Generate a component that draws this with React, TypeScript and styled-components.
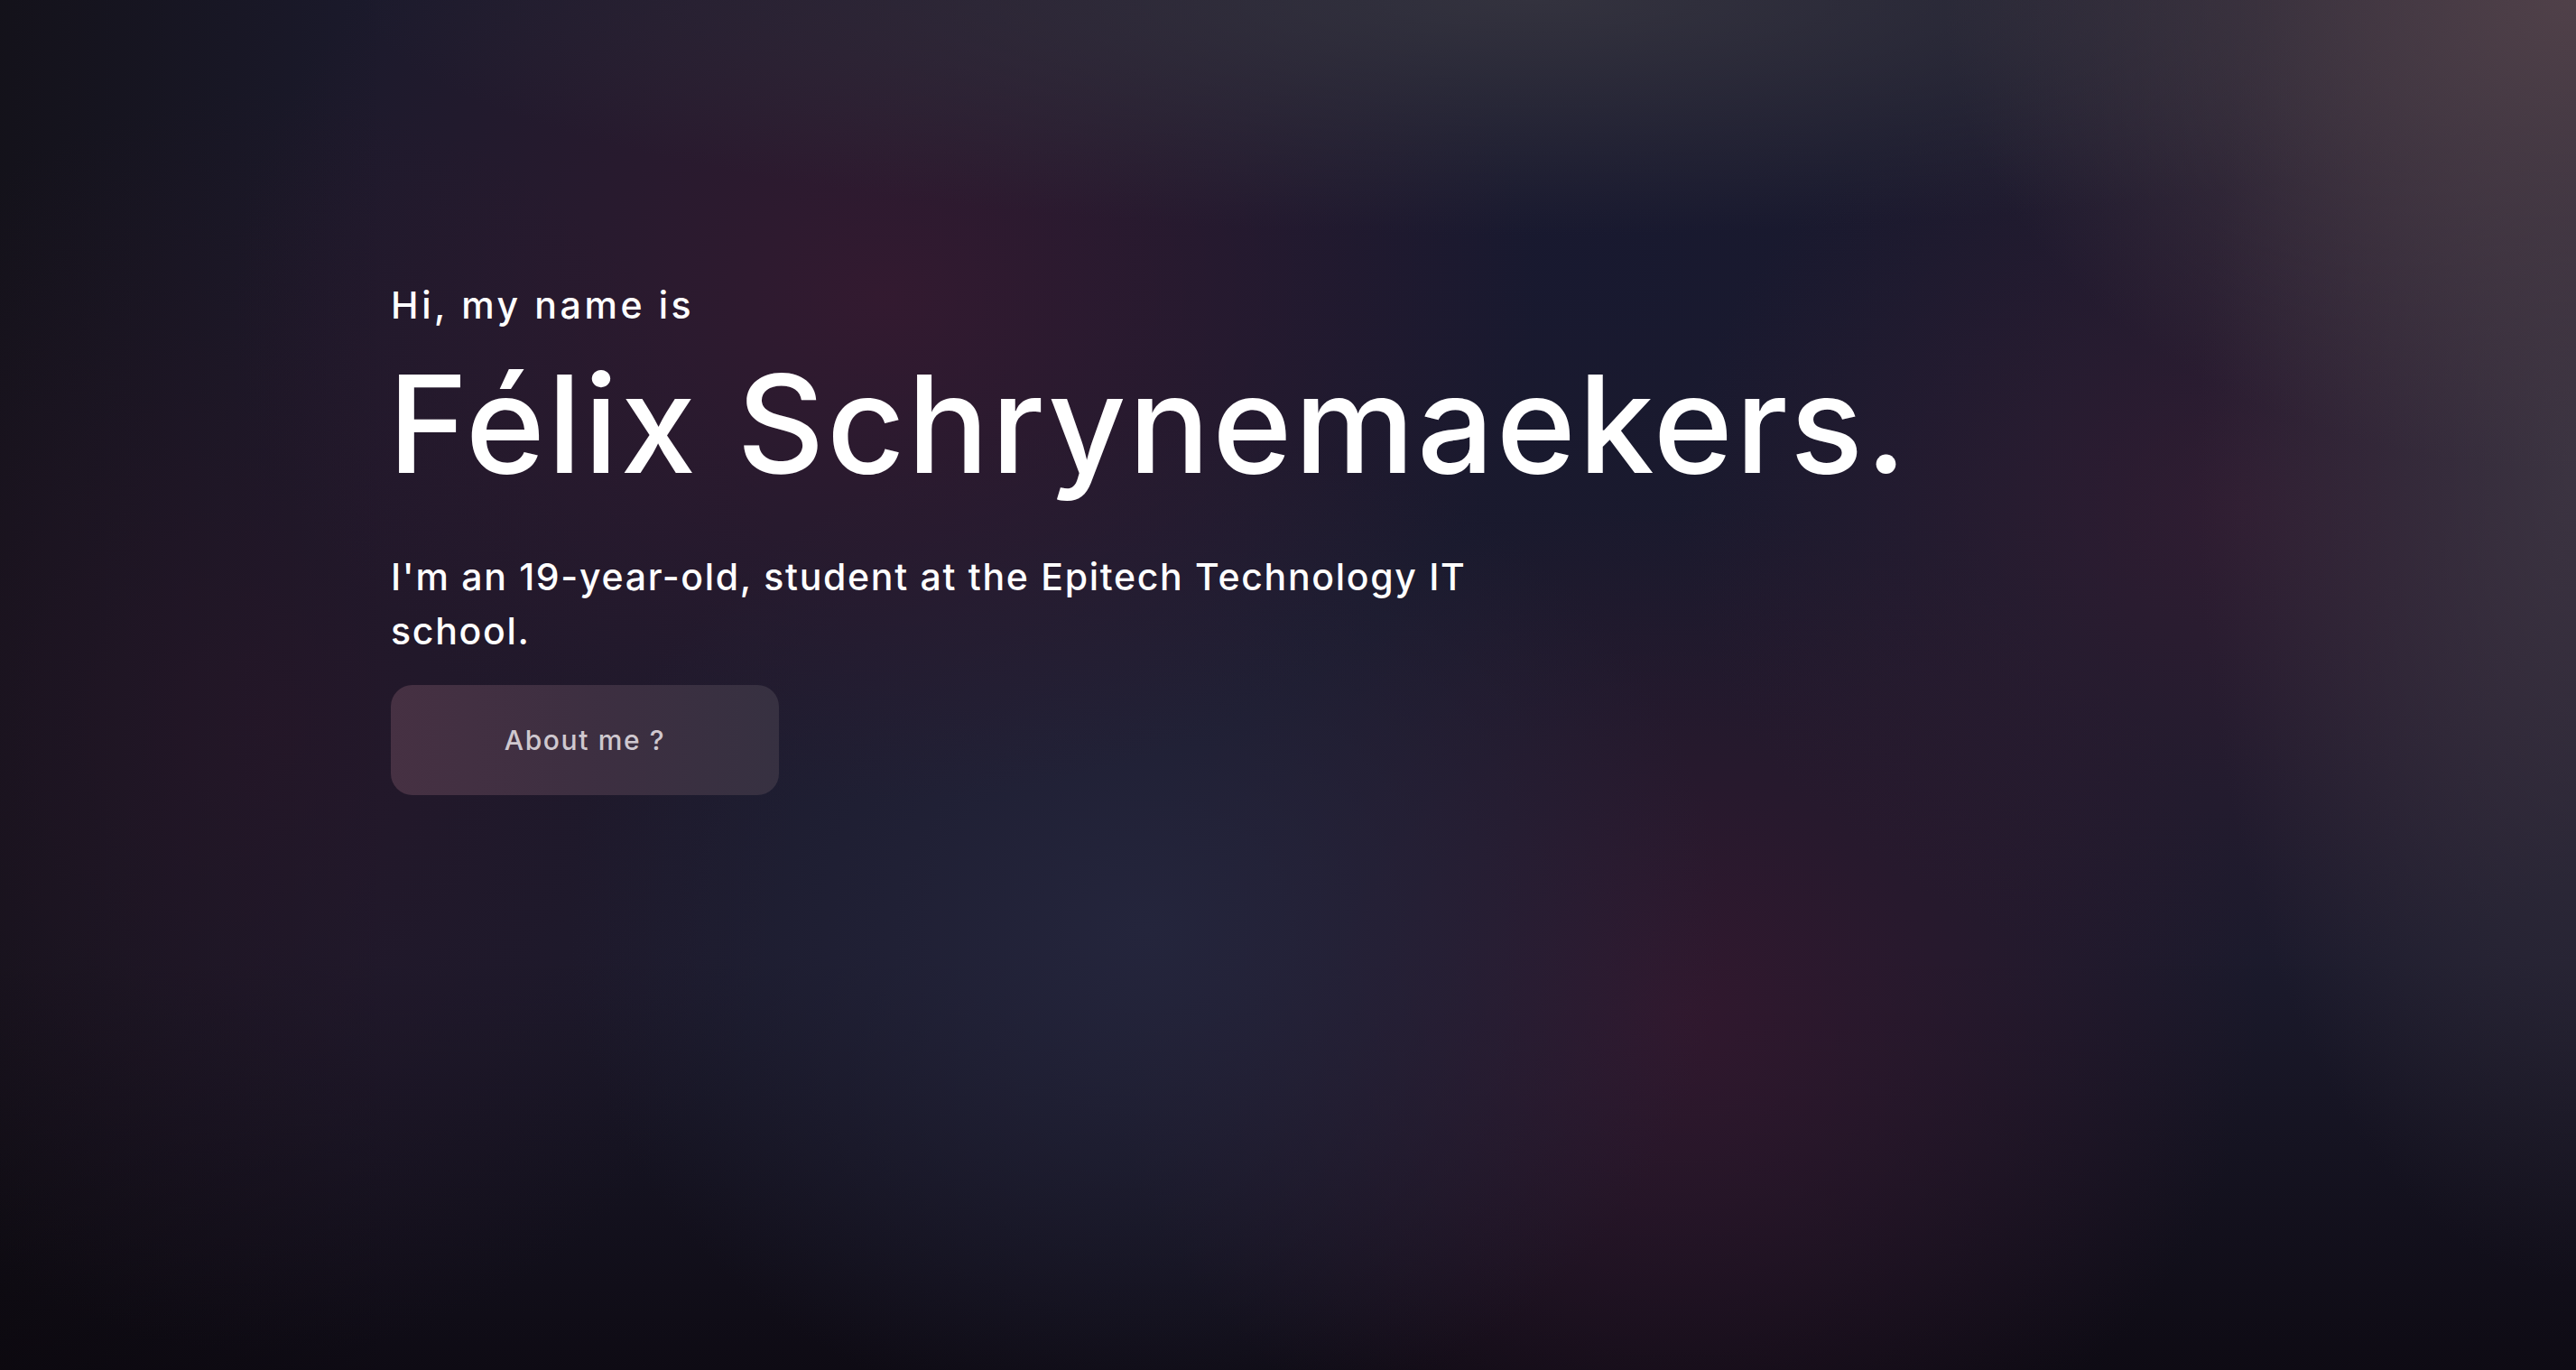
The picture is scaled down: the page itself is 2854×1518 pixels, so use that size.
import React from "react";
import styled, { createGlobalStyle } from "styled-components";

const GlobalStyle = createGlobalStyle`
  html, body {
    margin: 0;
    padding: 0;
    background: #15141f;
  }
  * { box-sizing: border-box; }
`;

const Page = styled.main`
  width: 100%;
  min-height: 100vh;
  height: 1518px;
  overflow: hidden;
  font-family: "Inter", "Noto Sans", sans-serif;
  color: #ffffff;
  background:
    radial-gradient(ellipse 700px 520px at 2854px 0px, rgba(82, 66, 74, 0.95), rgba(82, 66, 74, 0) 100%),
    radial-gradient(ellipse 420px 900px at 2854px 520px, rgba(66, 58, 70, 0.8), rgba(66, 58, 70, 0) 100%),
    radial-gradient(ellipse 1300px 260px at 1700px 0px, rgba(54, 53, 64, 0.9), rgba(54, 53, 64, 0) 100%),
    radial-gradient(ellipse 720px 560px at 980px 330px, rgba(52, 26, 48, 0.95), rgba(52, 26, 48, 0) 100%),
    radial-gradient(ellipse 620px 520px at 2480px 560px, rgba(56, 30, 52, 0.7), rgba(56, 30, 52, 0) 100%),
    radial-gradient(ellipse 640px 560px at 1270px 1030px, rgba(36, 37, 60, 1), rgba(36, 37, 60, 0) 100%),
    radial-gradient(ellipse 640px 560px at 1860px 1120px, rgba(50, 24, 46, 0.95), rgba(50, 24, 46, 0) 100%),
    radial-gradient(ellipse 900px 520px at 1750px 300px, rgba(24, 25, 48, 0.9), rgba(24, 25, 48, 0) 100%),
    radial-gradient(ellipse 600px 700px at 300px 800px, rgba(40, 22, 40, 0.7), rgba(40, 22, 40, 0) 100%),
    linear-gradient(180deg, rgba(0,0,0,0) 0%, rgba(0,0,0,0) 70%, rgba(10, 6, 12, 0.75) 100%),
    linear-gradient(90deg, rgba(18, 16, 22, 0.8) 0%, rgba(18,16,22,0) 15%),
    #1b1a2c;
`;

const Hero = styled.section`
  display: flex;
  flex-direction: column;
  align-items: flex-start;
  padding: 310px 0 0 433px;
`;

const Greeting = styled.p`
  margin: 0;
  font-size: 41px;
  line-height: 56px;
  font-weight: 500;
  letter-spacing: 3.6px;
`;

const Name = styled.h1`
  margin: 19px 0 0 -3px;
  font-size: 150px;
  line-height: 170px;
  font-weight: 500;
  letter-spacing: 2.7px;
`;

const Intro = styled.p`
  margin: 54px 0 0;
  max-width: 1290px;
  font-size: 41px;
  line-height: 60px;
  font-weight: 500;
  letter-spacing: 1.7px;
`;

const AboutButton = styled.button`
  margin-top: 30px;
  width: 430px;
  height: 122px;
  border: none;
  border-radius: 24px;
  background: linear-gradient(90deg, rgba(72, 50, 68, 0.95) 0%, rgba(62, 48, 66, 0.95) 55%, rgba(56, 50, 66, 0.95) 100%);
  color: #cfc8cf;
  font-family: "Inter", "Noto Sans", sans-serif;
  font-size: 30px;
  font-weight: 500;
  letter-spacing: 1.6px;
  cursor: pointer;
`;

export default function App() {
  return (
    <>
      <GlobalStyle />
      <Page>
        <Hero>
          <Greeting>Hi, my name is</Greeting>
          <Name>Félix Schrynemaekers.</Name>
          <Intro>I'm an 19-year-old, student at the Epitech Technology IT school.</Intro>
          <AboutButton>About me ?</AboutButton>
        </Hero>
      </Page>
    </>
  );
}
